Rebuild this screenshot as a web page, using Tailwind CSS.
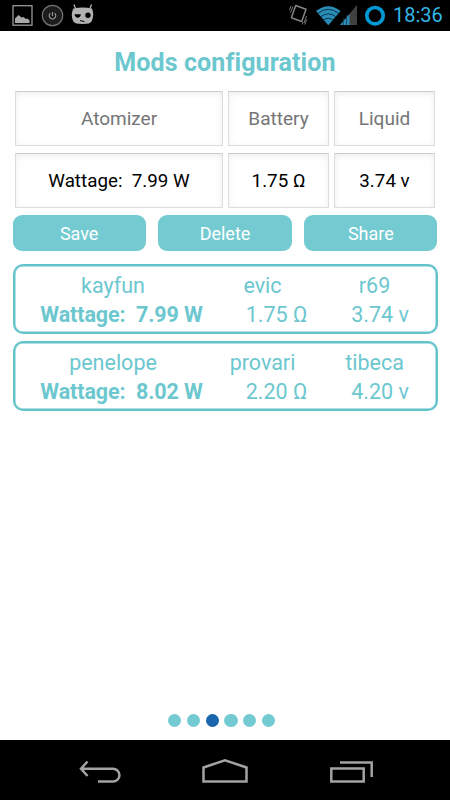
<!DOCTYPE html>
<html lang="en">

<head>
    <meta charset="UTF-8">
    <meta name="viewport" content="width=device-width, initial-scale=1.0">
    <title>Mods configuration</title>
    <script src="https://cdn.jsdelivr.net/npm/@tailwindcss/browser@4"></script>
</head>

<body class="bg-white font-[Roboto,sans-serif] w-[450px] h-[800px] flex flex-col overflow-hidden">
    <!-- status bar -->
    <header class="bg-black h-[31px] shrink-0 flex items-center justify-between pr-[7px]">
        <svg class="w-[110px] h-[31px]" viewBox="0 0 110 31" fill="none">
            <rect x="13" y="5.700" width="19" height="19.500" stroke="#999" stroke-width="1.300" />
            <path d="M15 23v-4.500l3.500-3.500 3 2.500 2-.5 2.500 2 1.500-.5 2 2V23z" fill="#aaa" />
            <circle cx="52.500" cy="15.500" r="10.200" fill="#1c1c1c" stroke="#727272" stroke-width="1.200" />
            <path d="M50.300 13.200a3.300 3.300 0 1 0 4.400 0M52.500 12v4" stroke="#999" stroke-width="1.100" />
            <path d="M74 4.500l1.500 4M91.500 4.500l-1.500 4" stroke="#b2b2b2" stroke-width="1.300" />
            <path d="M73.500 8.500q9-2 18.500 0c1.800 4 1.600 9-.5 13q-1 2.500-9 2.500t-9-2.500c-2.100-4-2.300-9 0-13z" fill="#b2b2b2" />
            <path d="M74.500 14.300h6.300c0 4.500-6 4.500-6.300 0z" fill="#000" />
            <circle cx="88" cy="15.300" r="2.700" fill="#000" />
            <path d="M80 20.500l4.500 1.200" stroke="#000" />
        </svg>
        <div class="flex items-center">
            <svg class="w-[103px] h-[31px]" viewBox="285 0 103 31" fill="none">
                <path d="M295.700 5.500l10.300 3.800-4.300 12.200-10.300-3.800z" stroke="#858585" stroke-width="1.500" stroke-linejoin="round" />
                <path d="M293 6.500l-2.500 6M291 6l-1.500 4M306.500 16l-2.500 7M304.800 24.500l2-5M303 22l-.8 2.500" stroke="#777" stroke-width="1" />
                <path d="M316 11q12.300-9.500 24.600 0L328.300 25.300z" fill="#2a8db9" />
                <path d="M318 13.300q10.300-8 20.600 0M320.800 16.700q7.500-5.800 15 0M323.700 20q4.600-3.500 9.200 0" stroke="#062633" stroke-width=".9" />
                <path d="M357 5v20h-17z" fill="#404040" />
                <path d="M340 25l9.500-11V25z" fill="#2a8db9" />
                <path d="M343.300 18v7M346.500 15v10" stroke="#123a4c" stroke-width=".8" />
                <circle cx="375" cy="15.700" r="8.200" stroke="#0099d4" stroke-width="3.700" />
            </svg>
            <span class="text-[#33b5e5] text-[20px] leading-[31px] w-[55px] pl-[5px] whitespace-nowrap">18:36</span>
        </div>
    </header>

    <main class="flex-1 flex flex-col px-[12.500px]">
        <h1 class="mt-[16px] h-[31px] text-center text-[25px] leading-[31px] tracking-[.1px] font-bold text-[#6cc7cf]">Mods configuration</h1>

        <div class="mt-[13px] mx-[2.500px] grid grid-cols-[208px_101px_101px] gap-x-[5px] gap-y-[7px] text-[19px] text-center leading-[53px]">
            <div class="h-[55px] border border-[#ddd] border-t-[#ccc] shadow-[inset_0_2px_6px_#00000012] text-[#757575]">Atomizer</div>
            <div class="h-[55px] border border-[#ddd] border-t-[#ccc] shadow-[inset_0_2px_6px_#00000012] text-[#757575]">Battery</div>
            <div class="h-[55px] border border-[#ddd] border-t-[#ccc] shadow-[inset_0_2px_6px_#00000012] text-[#757575]">Liquid</div>
            <div class="h-[55px] border border-[#ddd] border-t-[#ccc] shadow-[inset_0_2px_6px_#00000012] text-black text-[18.800px] leading-[54px] whitespace-pre">Wattage:  7.99 W</div>
            <div class="h-[55px] border border-[#ddd] border-t-[#ccc] shadow-[inset_0_2px_6px_#00000012] text-black text-[18.800px] leading-[54px]">1.75 Ω</div>
            <div class="h-[55px] border border-[#ddd] border-t-[#ccc] shadow-[inset_0_2px_6px_#00000012] text-black text-[18.800px] leading-[54px]">3.74 v</div>
        </div>

        <div class="mt-[7px] grid grid-cols-3 gap-[12.500px] text-[18px]">
            <button class="h-[36px] rounded-[9px] bg-[#74cad1] text-white">Save</button>
            <button class="h-[36px] rounded-[9px] bg-[#74cad1] text-white">Delete</button>
            <button class="h-[36px] rounded-[9px] bg-[#74cad1] text-white">Share</button>
        </div>

        <!-- saved mods -->
        <div class="mt-[13px] flex flex-col gap-[7px] text-[#6cc7cf] text-[21.500px] text-center">
            <div class="h-[70px] border-2 border-[#63c3cb] rounded-[10px] pt-[5px] shadow-[inset_0_0_0_.5px_#63c3cb]">
                <div class="grid grid-cols-[197px_102px_122px] leading-[29px]">
                    <span>kayfun</span><span>evic</span><span>r69</span>
                </div>
                <div class="grid grid-cols-[214px_96px_111px] leading-[29px]">
                    <b class="whitespace-pre tracking-[-.1px]">Wattage:  7.99 W</b><span>1.75 Ω</span><span>3.74 v</span>
                </div>
            </div>
            <div class="h-[70px] border-2 border-[#63c3cb] rounded-[10px] pt-[5px] shadow-[inset_0_0_0_.5px_#63c3cb]">
                <div class="grid grid-cols-[197px_102px_122px] leading-[29px]">
                    <span>penelope</span><span>provari</span><span>tibeca</span>
                </div>
                <div class="grid grid-cols-[214px_96px_111px] leading-[29px]">
                    <b class="whitespace-pre tracking-[-.1px]">Wattage:  8.02 W</b><span>2.20 Ω</span><span>4.20 v</span>
                </div>
            </div>
        </div>

        <!-- page dots -->
        <div class="mt-auto mb-[13px] ml-[155.500px] flex gap-[5.500px]">
            <i class="size-[13.300px] rounded-full bg-[#74cad1]"></i>
            <i class="size-[13.300px] rounded-full bg-[#74cad1]"></i>
            <i class="size-[13.300px] rounded-full bg-[#1a65ad]"></i>
            <i class="size-[13.300px] rounded-full bg-[#74cad1]"></i>
            <i class="size-[13.300px] rounded-full bg-[#74cad1]"></i>
            <i class="size-[13.300px] rounded-full bg-[#74cad1]"></i>
        </div>
    </main>

    <!-- navigation bar -->
    <nav class="bg-black h-[60px] shrink-0">
        <svg class="w-[450px] h-[60px]" viewBox="0 0 450 60" fill="none" stroke="#a3a3a3" stroke-width="2.500">
            <path d="M87.500 21.500L81 28.700l6.500 7.300M81 28.700h32a6.300 6.300 0 0 1 0 12.900H98" />
            <path d="M203.500 27.500L225 20.200l21.500 7.300v14h-43z" />
            <path d="M331.300 28.500h32.400v13h-32.400zM340 22.500h31.700V37" />
        </svg>
    </nav>
</body>

</html>
